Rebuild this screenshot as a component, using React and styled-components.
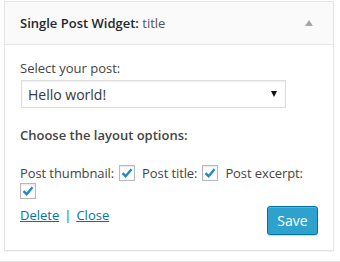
import React from "react";
import styled, { createGlobalStyle } from "styled-components";

const Global = createGlobalStyle`
  html, body { margin: 0; padding: 0; background: #fff; overflow: hidden; }
  body { font-family: "Open Sans", "Noto Sans", sans-serif; color: #444; font-size: 13px; }
`;

const Page = styled.div`
  padding: 1px 6px 0 4px;
  width: 340px;
  box-sizing: border-box;
`;

const Widget = styled.div`
  width: 330px;
  height: 250px;
  box-sizing: border-box;
  border: 1px solid #e5e5e5;
  background: #fff;
  box-shadow: 0 1px 1px rgba(0, 0, 0, 0.04);
  display: flex;
  flex-direction: column;
`;

const Header = styled.div`
  height: 42px;
  flex: none;
  background: #fafafa;
  border-bottom: 1px solid #e5e5e5;
  display: flex;
  align-items: center;
  justify-content: space-between;
  padding: 0 20px 0 15px;
`;

const Title = styled.h3`
  margin: 0;
  font-size: 13px;
  font-weight: 600;
  color: #23282d;
  span { font-weight: 400; color: #555; }
`;

const Toggle = styled.span`
  width: 0;
  height: 0;
  border-left: 4px solid transparent;
  border-right: 4px solid transparent;
  border-bottom: 6px solid #a0a5aa;
`;

const Body = styled.div`
  padding: 14px 15px 0 15px;
  flex: 1;
  display: flex;
  flex-direction: column;
`;

const Label = styled.div`
  font-size: 13px;
  line-height: 18px;
  color: #444;
  font-weight: ${(p) => (p.$bold ? 600 : 400)};
  margin-top: ${(p) => p.$top || 0}px;
`;

const Select = styled.div`
  margin: 3px 0 0 1px;
  width: 265px;
  height: 28px;
  box-sizing: border-box;
  border: 1px solid #ddd;
  background: #fff;
  display: flex;
  align-items: center;
  justify-content: space-between;
  padding: 0 8px 0 6px;
  font-size: 14px;
  color: #32373c;
  box-shadow: inset 0 1px 2px rgba(0, 0, 0, 0.07);
`;

const Caret = styled.span`
  width: 0;
  height: 0;
  border-left: 3.5px solid transparent;
  border-right: 3.5px solid transparent;
  border-top: 6px solid #111;
`;

const Options = styled.div`
  margin-top: 20px;
  display: flex;
  flex-wrap: wrap;
  align-items: center;
  row-gap: 1px;
  width: 300px;
  font-size: 13px;
  line-height: 18px;
  letter-spacing: -0.1px;
`;

const Option = styled.label`
  display: inline-flex;
  align-items: center;
  margin-right: 7px;
  white-space: nowrap;
  color: #444;
`;

const Box = styled.span`
  width: 16px;
  height: 16px;
  box-sizing: border-box;
  border: 1px solid #b4b9be;
  background: #fff;
  margin-left: ${(p) => (p.$alone ? 0 : 5)}px;
  display: inline-flex;
  align-items: center;
  justify-content: center;
  box-shadow: inset 0 1px 2px rgba(0, 0, 0, 0.1);
`;

const Footer = styled.div`
  margin-top: 7px;
  display: flex;
  justify-content: space-between;
  align-items: flex-start;
`;

const Links = styled.div`
  font-size: 13px;
  line-height: 18px;
  color: #0073aa;
  a { color: #0073aa; text-decoration: underline; }
  span { margin: 0 5px; color: #0073aa; }
`;

const SaveButton = styled.button`
  width: 51px;
  height: 29px;
  border: 1px solid #0074a2;
  border-radius: 3px;
  background: #2ea2cc;
  color: #fff;
  font-family: inherit;
  font-size: 14px;
  padding: 0;
  box-shadow: inset 0 1px 0 rgba(120, 200, 230, 0.5), 0 1px 0 rgba(0, 0, 0, 0.15);
`;

const Next = styled.div`
  margin-top: 10px;
  margin-left: -4px;
  width: 340px;
  height: 0;
  border-top: 1px solid #e5e5e5;
`;

const Check = () => (
  <svg width="14" height="14" viewBox="0 0 14 14">
    <path d="M2.5 7.2 L5.6 10.2 L11.5 3.2" fill="none" stroke="#1e8cbe" strokeWidth="2.4" />
  </svg>
);

export default function App() {
  return (
    <Page>
      <Global />
      <Widget>
        <Header>
          <Title>
            Single Post Widget: <span>title</span>
          </Title>
          <Toggle />
        </Header>
        <Body>
          <Label>Select your post:</Label>
          <Select>
            Hello world!
            <Caret />
          </Select>
          <Label $bold $top={18}>Choose the layout options:</Label>
          <Options>
            <Option>
              Post thumbnail:
              <Box><Check /></Box>
            </Option>
            <Option>
              Post title:
              <Box><Check /></Box>
            </Option>
            <Option>Post excerpt:</Option>
            <Box $alone><Check /></Box>
          </Options>
          <Footer>
            <Links>
              <a>Delete</a>
              <span>|</span>
              <a>Close</a>
            </Links>
            <SaveButton>Save</SaveButton>
          </Footer>
        </Body>
      </Widget>
      <Next />
    </Page>
  );
}
